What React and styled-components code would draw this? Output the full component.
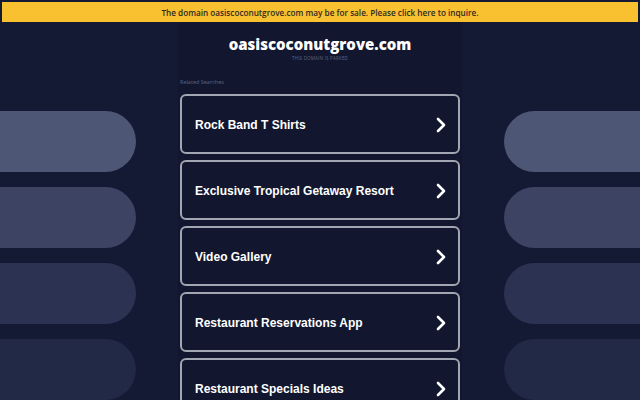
import React from 'react'
import styled, { createGlobalStyle } from 'styled-components'

const GlobalStyle = createGlobalStyle`
  html, body {
    margin: 0;
    padding: 0;
    background: #141a34;
    height: 100%;
    overflow: hidden;
  }
  #root { height: 100%; }
`

const searches = [
  'Rock Band T Shirts',
  'Exclusive Tropical Getaway Resort',
  'Video Gallery',
  'Restaurant Reservations App',
  'Restaurant Specials Ideas',
]

const pillColors = ['#4d5674', '#3d4463', '#2c3352', '#212946']

function Chevron() {
  return (
    <svg width="12" height="16" viewBox="0 0 12 16">
      <path d="M3 2 L9 8 L3 14" fill="none" stroke="#fff" strokeWidth="2.6" strokeLinecap="round" strokeLinejoin="round" />
    </svg>
  )
}

function SideColumn({ side }) {
  return (
    <Side side={side}>
      {pillColors.map(c => (
        <Pill key={c} side={side} color={c} />
      ))}
    </Side>
  )
}

export default function App() {
  return (
    <Page>
      <GlobalStyle />
      <Banner>The domain oasiscoconutgrove.com may be for sale. Please click here to inquire.</Banner>
      <Main>
        <SideColumn side="left" />
        <Center>
          <Title>oasiscoconutgrove.com</Title>
          <Parked>THIS DOMAIN IS PARKED</Parked>
          <Related>Related Searches</Related>
          <Cards>
            {searches.map(s => (
              <Card key={s}>
                <span>{s}</span>
                <Chevron />
              </Card>
            ))}
          </Cards>
        </Center>
        <SideColumn side="right" />
      </Main>
    </Page>
  )
}

const Page = styled.div`
  height: 400px;
  display: flex;
  flex-direction: column;
  font-family: 'Liberation Sans', Arial, sans-serif;
`

const Banner = styled.div`
  margin: 2px 2px 0;
  height: 20px;
  background: #f9c02f;
  color: #2e2a22;
  font-family: 'Open Sans', 'Liberation Sans', sans-serif;
  font-size: 8.2px;
  font-weight: 600;
  display: flex;
  align-items: center;
  justify-content: center;
`

const Main = styled.div`
  flex: 1;
  display: flex;
  overflow: hidden;
`

const Side = styled.div`
  flex: 1;
  display: flex;
  flex-direction: column;
  align-items: ${p => (p.side === 'left' ? 'flex-start' : 'flex-end')};
  gap: 15px;
  padding-top: 89px;
`

const Pill = styled.div`
  width: 136px;
  height: 61px;
  flex-shrink: 0;
  background: ${p => p.color};
  border-radius: ${p => (p.side === 'left' ? '0 31px 31px 0' : '31px 0 0 31px')};
`

const Center = styled.div`
  width: 284px;
  background: #12172f;
  display: flex;
  flex-direction: column;
  align-items: center;
  padding-top: 13px;
`

const Title = styled.div`
  color: #fff;
  font-family: 'Open Sans', 'Liberation Sans', sans-serif;
  font-weight: 800;
  font-size: 15px;
  line-height: 18px;
`

const Parked = styled.div`
  color: #5f6580;
  font-family: 'Open Sans', 'Liberation Sans', sans-serif;
  font-size: 4.5px;
  line-height: 8px;
  margin-top: 1px;
  letter-spacing: 0.2px;
`

const Related = styled.div`
  align-self: flex-start;
  margin: 17px 0 0 2px;
  color: #5f6580;
  font-family: 'Open Sans', 'Liberation Sans', sans-serif;
  font-size: 5.5px;
  line-height: 7px;
`

const Cards = styled.div`
  width: 280px;
  display: flex;
  flex-direction: column;
  gap: 6px;
  margin-top: 8px;
`

const Card = styled.div`
  box-sizing: border-box;
  height: 60px;
  flex-shrink: 0;
  border: 2px solid #a2a6b2;
  border-radius: 6px;
  background: #12172f;
  color: #fff;
  font-size: 12px;
  font-weight: 700;
  display: flex;
  align-items: center;
  justify-content: space-between;
  padding: 1px 11px 0 13px;
`
